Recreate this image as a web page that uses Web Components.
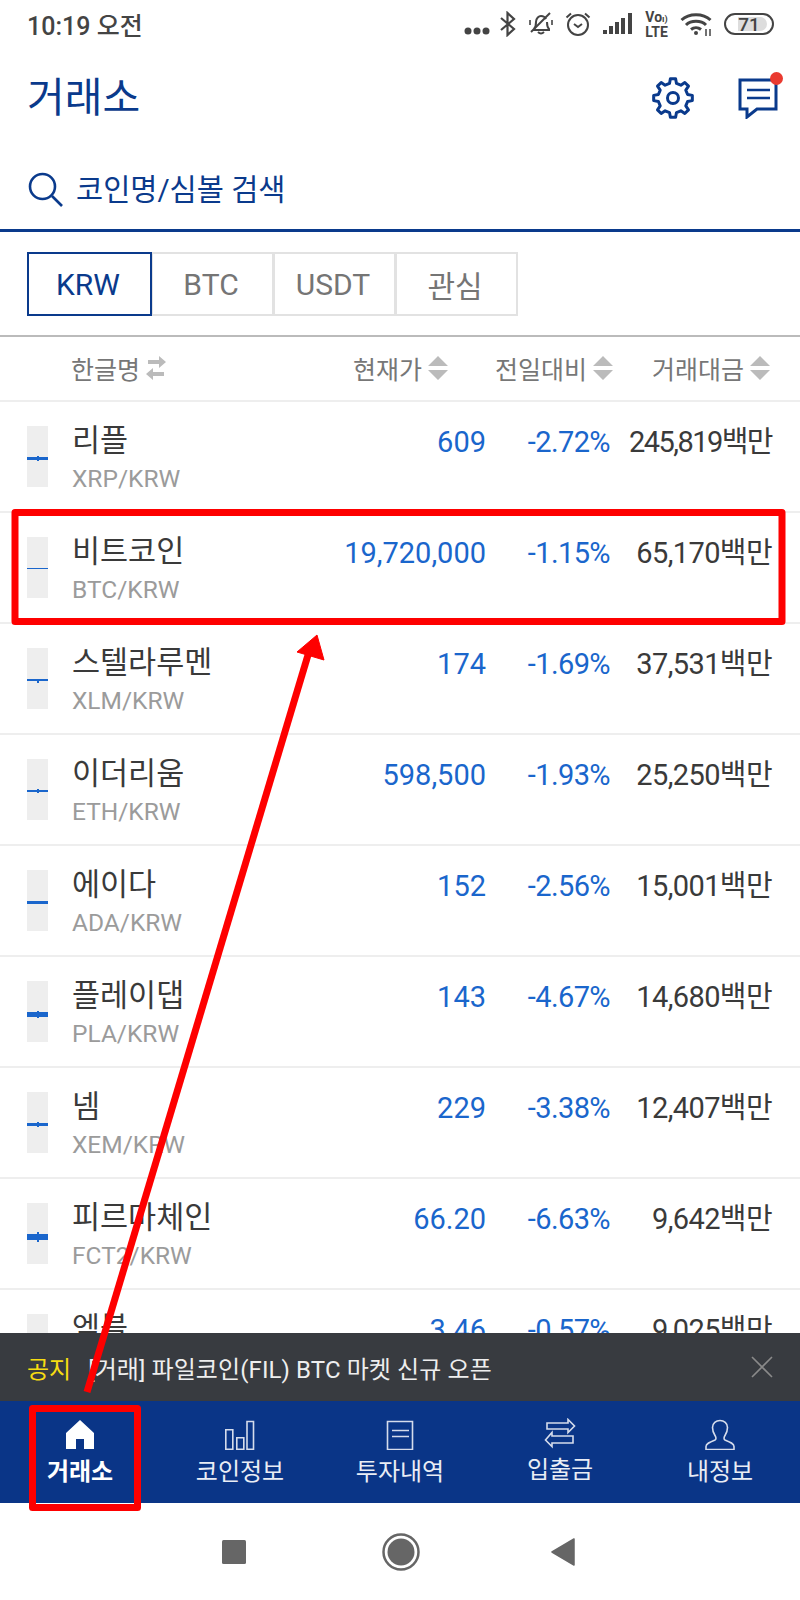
<!DOCTYPE html>
<html lang="ko">
<head>
<meta charset="utf-8">
<title>거래소</title>
<style>
  html, body { margin: 0; padding: 0; background: #fff; }
  body { font-family: Roboto, "Noto Sans CJK KR", sans-serif; width: 800px; height: 1600px; overflow: hidden; }
</style>
</head>
<body>
<exchange-app></exchange-app>
<script>
const FONT = 'Roboto, "Noto Sans CJK KR", sans-serif';
function el(tag, html) {
  return class extends HTMLElement {
    constructor() { super(); this.attachShadow({mode:'open'}).innerHTML = typeof html === 'function' ? html(this) : html; }
  };
}
function gearPath(cx, cy, ro, ri, n) {
  let d = '';
  const step = Math.PI * 2 / n;
  for (let i = 0; i < n; i++) {
    const a = i * step - Math.PI / 2;
    const pts = [[ri, a - step * .30],[ro, a - step * .17],[ro, a + step * .17],[ri, a + step * .30]];
    pts.forEach((p, j) => {
      const x = (cx + p[0] * Math.cos(p[1])).toFixed(2), y = (cy + p[0] * Math.sin(p[1])).toFixed(2);
      d += (i === 0 && j === 0 ? 'M' : 'L') + x + ' ' + y + ' ';
    });
  }
  return d + 'Z';
}

customElements.define('status-bar', el('status-bar', `
<style>
  :host { display:flex; align-items:center; justify-content:space-between; height:48px; padding:0 26px 0 27px; color:#444; box-sizing:border-box; }
  .t { font: 500 25px ${FONT}; padding-bottom:1px; }
  .icons { display:flex; align-items:center; }
  svg { display:block; }
  .volte { font: 700 14px/13px ${FONT}; width:25px; margin:2px 11px 0 11px; text-align:center; color:#444; white-space:nowrap; }
  .volte span { display:block; }
  .batt { position:relative; width:50px; height:22px; box-sizing:border-box; border:2px solid #444; border-radius:11px; margin-left:12px; overflow:hidden; display:flex; align-items:center; justify-content:center; font:500 19px ${FONT}; color:#444; }
  .batt i { position:absolute; left:12px; top:2px; bottom:2px; width:29px; background:#ddd; border-radius:0 8px 8px 0; }
  .batt b { position:relative; font-weight:500; }
</style>
<span class="t">10:19 오전</span>
<div class="icons">
  <svg width="26" height="8" viewBox="0 0 26 8" fill="#444" style="margin-top:13px;margin-right:9px"><circle cx="4" cy="4" r="3.5"/><circle cx="13" cy="4" r="3.5"/><circle cx="22" cy="4" r="3.5"/></svg>
  <svg width="17" height="26" viewBox="0 0 17 26" fill="none" stroke="#444" stroke-width="2.2" style="margin-right:12px"><path d="M2 7l13 11-6.5 6V2L15 8 2 19"/></svg>
  <svg width="26" height="26" viewBox="0 0 26 26" fill="none" stroke="#444" stroke-width="2" style="margin-right:11px"><path d="M6 18c2-2 2-4 2-7 0-4 3-6 5-6s4 1 5 3M19 11c0 3 0 5 2 7v1H5M10 21c2 2 4 2 6 0"/><path d="M3 21 22 2"/><path d="M2 9v5M24 9v5" stroke-width="1.6"/></svg>
  <svg width="26" height="26" viewBox="0 0 26 26" fill="none" stroke="#444" stroke-width="2" style="margin-right:12px"><circle cx="13" cy="14" r="10"/><path d="M9 13l4 3 4-3M1.5 6.500 6 2.500M24.500 6.500 20 2.500"/></svg>
  <svg width="30" height="22" viewBox="0 0 30 22" fill="#444"><rect x="0" y="17" width="4" height="4"/><rect x="6" y="13" width="4" height="8"/><rect x="12" y="9" width="4" height="12"/><rect x="18" y="5" width="4" height="16"/><rect x="25" y="0" width="4" height="21"/></svg>
  <div class="volte"><span>Vo<small style="font-size:9px">ı)</small></span><span>LTE</span></div>
  <svg width="32" height="26" viewBox="0 0 32 26" fill="none" stroke="#444" stroke-width="3"><path d="M1.500 9C9 2 23 2 30.500 9M6 14c5-5 15-5 20 0M11 18.500c3-2.500 7-2.500 10 0"/><circle cx="16" cy="22" r="2" fill="#444" stroke="none"/><path d="M26 18v7M30 18v7" stroke-width="1.500"/></svg>
  <div class="batt"><i></i><b>71</b></div>
</div>`));

customElements.define('gear-icon', el('gear-icon', `
<style>:host{display:block;width:42px;height:42px} svg{display:block}</style>
<svg width="42" height="42" viewBox="0 0 42 42" fill="none" stroke="#0a3a8c" stroke-width="3" stroke-linejoin="round">
<path d="${gearPath(21,21,19.5,15,8)}"/><circle cx="21" cy="21" r="5.500"/></svg>`));

customElements.define('title-bar', el('title-bar', `
<style>
  :host { display:flex; align-items:center; justify-content:space-between; height:100px; padding:0 22px 0 27px; box-sizing:border-box; color:#0a3a8c; }
  h1 { margin:0; font: 400 41px/1 ${FONT}; }
  .a { display:flex; align-items:center; gap:44px; }
  .msg { position:relative; width:40px; height:42px; }
  .msg u { position:absolute; right:-5px; top:-5px; width:13px; height:13px; background:#ea3a30; border-radius:50%; }
  svg { display:block; }
</style>
<h1>거래소</h1>
<div class="a">
  <gear-icon></gear-icon>
  <div class="msg">
    <svg width="40" height="42" viewBox="0 0 40 42" fill="none" stroke="#0a3a8c" stroke-width="3"><path d="M2 3h36v29H19l-10 8v-8H2z"/><path d="M9 13h23M9 21h23" stroke-width="2.500"/></svg>
    <u></u>
  </div>
</div>`));

customElements.define('search-bar', el('search-bar', `
<style>
  :host { display:flex; align-items:center; height:84px; padding:0 0 0 28px; box-sizing:border-box; border-bottom:3px solid #0a3a8c; color:#0a3a8c; font: 400 29.5px/1 ${FONT}; }
  svg { display:block; margin-right:12px; margin-top:2px; }
  span { padding-top:5px; }
</style>
<svg width="36" height="36" viewBox="0 0 36 36" fill="none" stroke="#0a3a8c" stroke-width="2.600"><circle cx="14.500" cy="14.500" r="12.500"/><path d="M24 24l10 10"/></svg>
<span>코인명/심볼 검색</span>`));

customElements.define('market-tabs', el('market-tabs', `
<style>
  :host { display:flex; padding:20px 0 19px 27px; border-bottom:2px solid #bbb; box-sizing:border-box; height:105px; }
  div { display:flex; align-items:center; justify-content:center; height:64px; box-sizing:border-box; width:123px; margin-right:-1px; padding-right:3px; border:2px solid #e2e2e2; font: 400 30px ${FONT}; color:#757575; }
  .on { border-color:#0a3a8c; color:#0a3a8c; position:relative; z-index:1; width:125px; }
</style>
<div class="on">KRW</div><div>BTC</div><div>USDT</div><div>관심</div>`));

const sortIcon = `<svg width="20" height="24" viewBox="0 0 20 24" fill="#bbb"><path d="M10 0 20 10H0zM0 14h20L10 24z"/></svg>`;
customElements.define('sort-header', el('sort-header', `
<style>
  :host { display:flex; align-items:center; height:65px; border-bottom:2px solid #eee; box-sizing:border-box; padding:0 30px 2px 71px; font: 400 25px ${FONT}; color:#777; }
  span { display:flex; align-items:center; gap:6px; }
  .c { justify-content:flex-end; }
  .n { flex:1; }
  .d { width:165px; } .v { width:157px; }
  svg { display:block; }
</style>
<span class="n">한글명<svg width="20" height="24" viewBox="0 0 20 24" fill="#bbb"><path d="M13 0l7 6-7 6V8H2V4h11zM7 12v4h11v4H7v4l-7-6z" /></svg></span>
<span class="c p">현재가${sortIcon}</span><span class="c d">전일대비${sortIcon}</span><span class="c v">거래대금${sortIcon}</span>`));

customElements.define('coin-row', class extends HTMLElement {
  constructor() {
    super();
    const a = k => this.getAttribute(k) || '';
    const th = +a('th'), ln = 31;
    const tick = a('tick') ? `<b style="top:${+a('tick').split(',')[0]}px;height:${+a('tick').split(',')[1]}px"></b>` : '';
    const sub = a('y') ? `<div class="y">${a('y')}</div>` : '';
    this.attachShadow({mode:'open'}).innerHTML = `
<style>
  :host { display:flex; align-items:flex-start; height:111px; box-sizing:border-box; border-bottom:2px solid #eee; padding:0 28px 0 27px; flex:none; }
  .s { position:relative; width:21px; height:61px; background:#eee; margin:24px 24px 0 0; flex:none; }
  .s i { position:absolute; left:0; right:0; background:#1a66cc; }
  .s b { position:absolute; left:10px; width:2px; background:#1a66cc; }
  .nm { flex:1; padding-top:20px; }
  .k { font:400 30.5px/38px ${FONT}; color:#3a3a3a; }
  .y { font:400 24.5px/30px ${FONT}; color:#9b9b9b; margin-top:4px; }
  .n { font:400 29px/38px ${FONT}; text-align:right; padding-top:21px; }
  .p { color:#1a66cc; }
  .d { color:#1a66cc; width:124px; letter-spacing:-.6px; }
  .v { color:#3a3a3a; width:162px; letter-spacing:${a('ls') || '-.6'}px; }
</style>
<div class="s"><i style="top:${ln}px;height:${th}px"></i>${tick}</div>
<div class="nm"><div class="k">${a('k')}</div>${sub}</div>
<div class="n p">${a('p')}</div><div class="n d">${a('d')}</div><div class="n v">${a('v')}</div>`;
  }
});

customElements.define('coin-list', el('coin-list', `
<style>:host { display:flex; flex-direction:column; flex:1; min-height:0; overflow:hidden; }</style>
<coin-row k="리플" y="XRP/KRW" p="609" d="-2.72%" v="245,819백만" ls="-1.55" th="3" tick="30,5"></coin-row>
<coin-row k="비트코인" y="BTC/KRW" p="19,720,000" d="-1.15%" v="65,170백만" th="1"></coin-row>
<coin-row k="스텔라루멘" y="XLM/KRW" p="174" d="-1.69%" v="37,531백만" th="2" tick="31,4"></coin-row>
<coin-row k="이더리움" y="ETH/KRW" p="598,500" d="-1.93%" v="25,250백만" th="2" tick="30,4"></coin-row>
<coin-row k="에이다" y="ADA/KRW" p="152" d="-2.56%" v="15,001백만" th="3"></coin-row>
<coin-row k="플레이댑" y="PLA/KRW" p="143" d="-4.67%" v="14,680백만" th="5" tick="30,7"></coin-row>
<coin-row k="넴" y="XEM/KRW" p="229" d="-3.38%" v="12,407백만" th="3" tick="30,5"></coin-row>
<coin-row k="피르마체인" y="FCT2/KRW" p="66.20" d="-6.63%" v="9,642백만" th="6" tick="29,10"></coin-row>
<coin-row k="엠블" p="3.46" d="-0.57%" v="9,025백만" th="2"></coin-row>`));

customElements.define('notice-bar', el('notice-bar', `
<style>
  :host { display:flex; align-items:center; height:68px; background:#383b40; padding:0 27px; box-sizing:border-box; font:400 24px ${FONT}; color:#eee; flex:none; position:relative; z-index:1; }
  b { font-weight:400; color:#f6dc12; margin-right:17px; }
  span { flex:1; letter-spacing:.1px; }
  svg { display:block; }
</style>
<b>공지</b><span>[거래] 파일코인(FIL) BTC 마켓 신규 오픈</span>
<svg width="22" height="22" viewBox="0 0 22 22" stroke="#8a8a8a" stroke-width="1.600" fill="none"><path d="M1 1l20 20M21 1 1 21"/></svg>`));

customElements.define('nav-item', class extends HTMLElement {
  constructor() {
    super();
    this.attachShadow({mode:'open'}).innerHTML = `
<style>
  :host { display:flex; flex-direction:column; align-items:center; flex:1; padding-top:17px; box-sizing:border-box; color:#e9edf5; font:400 24px/32px ${FONT}; }
  :host([on]) { color:#fff; font-weight:700; }
  :host([high]) span { margin-top:4px; }
  ::slotted(svg) { display:block; width:32px; height:32px; }
  span { margin-top:6px; }
</style>
<slot></slot><span>${this.getAttribute('label')}</span>`;
  }
});

customElements.define('bottom-nav', el('bottom-nav', `
<style>
  :host { display:flex; height:102px; background:#0a3587; flex:none; position:relative; z-index:1; }
  svg { display:block; width:32px; height:32px; fill:none; stroke:#d5dcec; stroke-width:1.600; }
</style>
<nav-item on label="거래소"><svg viewBox="0 0 32 32" style="fill:#fff;stroke:none"><path d="M16 2 30 15v16H20v-10h-8v10H2V15z"/></svg></nav-item>
<nav-item label="코인정보"><svg viewBox="0 0 32 32"><path d="M1.800 11.800h7v19.400h-7zM12.800 19.800h7v11.400h-7zM23 3.500h6.500v27.700H23z"/></svg></nav-item>
<nav-item label="투자내역"><svg viewBox="0 0 32 32"><path d="M3.500 3.500h25v28h-25zM8 12.500h17M8 18.500h17"/></svg></nav-item>
<nav-item high label="입출금"><svg viewBox="0 0 32 32"><path d="M3 5h21V1.500L30.500 8 24 14.500V11H3zM29 18H8v-3.500L1.500 22 8 28.500V25h21z"/></svg></nav-item>
<nav-item label="내정보"><svg viewBox="0 0 32 32"><path d="M2 31.500v-3c0-3 4-4.500 9-6.500 1.500-.8 1-3 0-4.500-2-3-2.500-5-2.500-8C8.500 5 12 2.500 16 2.500S23.500 5 23.500 9.500c0 3-.5 5-2.500 8-1 1.500-1.500 3.700 0 4.500 5 2 9 3.500 9 6.500v3z"/></svg></nav-item>`));

customElements.define('system-nav', el('system-nav', `
<style>
  :host { display:flex; align-items:center; height:97px; flex:none; padding:0 0 0 222px; }
  svg { display:block; }
</style>
<svg width="24" height="24" viewBox="0 0 24 24" style="margin-right:136px"><rect width="24" height="24" rx="1.500" fill="#666"/></svg>
<svg width="38" height="38" viewBox="0 0 38 38" style="margin-right:131px"><circle cx="19" cy="19" r="17.500" fill="none" stroke="#666" stroke-width="2.500"/><circle cx="19" cy="19" r="13.500" fill="#666"/></svg>
<svg width="24" height="28" viewBox="0 0 24 28"><path d="M23 1v26L1 14z" fill="#666" stroke="#666" stroke-width="1.500" stroke-linejoin="round"/></svg>`));

customElements.define('red-annotations', el('red-annotations', `
<style>:host { position:absolute; left:0; top:0; width:800px; height:1600px; pointer-events:none; z-index:5; } svg { display:block; }</style>
<svg width="800" height="1600" viewBox="0 0 800 1600" fill="none" stroke="#fe0000" stroke-width="7" stroke-linejoin="round">
  <rect x="15" y="512.500" width="767" height="109"/>
  <rect x="32.500" y="1408.500" width="105" height="99"/>
  <path d="M87 1392 311 645" stroke-width="7"/>
  <path d="M317 635 297 652 324 660Z" fill="#fe0000" stroke="#fe0000" stroke-width="1"/>
</svg>`));

customElements.define('exchange-app', el('exchange-app', `
<style>:host { display:flex; flex-direction:column; position:relative; width:800px; height:1600px; background:#fff; overflow:hidden; }</style>
<status-bar></status-bar>
<title-bar></title-bar>
<search-bar></search-bar>
<market-tabs></market-tabs>
<sort-header></sort-header>
<coin-list></coin-list>
<notice-bar></notice-bar>
<bottom-nav></bottom-nav>
<system-nav></system-nav>
<red-annotations></red-annotations>`));
</script>
</body>
</html>
